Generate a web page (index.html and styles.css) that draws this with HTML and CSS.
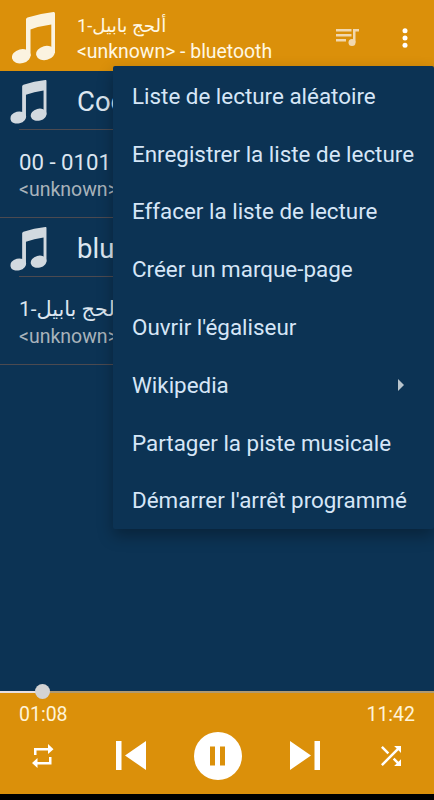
FILE: index.html
```html
<!DOCTYPE html>
<html lang="fr">
<head>
  <meta charset="UTF-8" />
  <meta name="viewport" content="width=device-width, initial-scale=1.0" />
  <title>Lecteur de musique</title>
  <link rel="stylesheet" href="styles.css">
</head>
<body>
  <svg class="defs" width="0" height="0">
    <symbol id="note" viewBox="0 0 43 52">
      <path d="M14 7.500 Q14 6 15.500 5.500 Q28 1.500 41.500 0 Q43 -.1 43 1.500 V41 H39.300 V12.500 Q28 14 18.500 17.500 V44 H14 Z" />
      <ellipse cx="9.300" cy="44.300" rx="9.500" ry="7" transform="rotate(-14 9.300 44.300)" />
      <ellipse cx="33.500" cy="41" rx="9.500" ry="7" transform="rotate(-14 33.500 41)" />
    </symbol>
  </svg>

  <div class="app">
    <header class="header">
      <svg class="header-note" viewBox="0 0 43 52"><use href="#note" /></svg>
      <div class="now-playing">
        <div class="now-title"><bdi dir="rtl">ألحج بابيل-1</bdi></div>
        <div class="now-artist">&lt;unknown&gt; - bluetooth</div>
      </div>
      <button class="icon-btn queue" aria-label="File de lecture">
        <svg width="24" height="18" viewBox="0 0 24 18">
          <path d="M0 0h15.500v2.500H0zM0 5h15.500v2.500H0zM0 10h10v2.500H0zM17 0h6v2.500h-3.500V13.500H17z" />
          <circle cx="16" cy="13.500" r="3.500" />
        </svg>
      </button>
      <button class="icon-btn more" aria-label="Plus d'options">
        <svg width="6" height="20" viewBox="0 0 6 20">
          <circle cx="3" cy="2.800" r="2.500" />
          <circle cx="3" cy="10" r="2.500" />
          <circle cx="3" cy="17.200" r="2.500" />
        </svg>
      </button>
    </header>

    <main class="playlist">
      <div class="folder">
        <svg class="folder-note" viewBox="0 0 43 52"><use href="#note" /></svg>
        <span>Coo</span>
      </div>
      <div class="track">
        <div class="track-title">00 - 0101</div>
        <div class="track-artist">&lt;unknown&gt;</div>
      </div>
      <div class="folder">
        <svg class="folder-note" viewBox="0 0 43 52"><use href="#note" /></svg>
        <span>blu</span>
      </div>
      <div class="track">
        <div class="track-title arabic"><bdi dir="rtl">ألحج بابيل-1</bdi></div>
        <div class="track-artist">&lt;unknown&gt;</div>
      </div>
    </main>

    <footer class="player">
      <div class="seek">
        <div class="seek-done"></div>
        <div class="seek-thumb"></div>
      </div>
      <div class="times"><span>01:08</span><span>11:42</span></div>
      <div class="controls">
        <button class="icon-btn" aria-label="Répéter">
          <svg width="22" height="24" viewBox="0 0 22 24">
            <path d="M2 11V4h14V0l5.500 5.200L16 10V6.500H4.500V11zM19.500 13v7.500h-14V24L0 19l5.500-5v4H17v-5z" />
          </svg>
        </button>
        <div class="transport">
          <button class="icon-btn" aria-label="Précédent">
            <svg width="30" height="29" viewBox="0 0 30 29">
              <path d="M0 0h5.500v29H0zM30 0v29L9 14.500z" />
            </svg>
          </button>
          <button class="icon-btn" aria-label="Pause">
            <svg width="48" height="48" viewBox="0 0 48 48">
              <circle cx="24" cy="24" r="24" />
              <path class="bars" d="M16 14.500h5v19h-5zM26 14.500h5v19h-5z" />
            </svg>
          </button>
          <button class="icon-btn" aria-label="Suivant">
            <svg width="30" height="29" viewBox="0 0 30 29">
              <path d="M0 0l21 14.500L0 29zM24.500 0H30v29h-5.500z" />
            </svg>
          </button>
        </div>
        <button class="icon-btn" aria-label="Aléatoire">
          <svg width="20" height="20" viewBox="4 4 16 16">
            <path d="M10.590 9.170L5.410 4 4 5.410l5.170 5.170 1.420-1.410zM14.500 4l2.040 2.040L4 18.590 5.410 20 17.960 7.460 20 9.500V4h-5.500zm.33 9.410l-1.410 1.410 3.130 3.130L14.500 20H20v-5.500l-2.040 2.040-3.130-3.130z" />
          </svg>
        </button>
      </div>
    </footer>
    <div class="navbar"></div>

    <ul class="menu">
      <li>Liste de lecture aléatoire</li>
      <li>Enregistrer la liste de lecture</li>
      <li>Effacer la liste de lecture</li>
      <li>Créer un marque-page</li>
      <li>Ouvrir l'égaliseur</li>
      <li class="submenu">Wikipedia</li>
      <li>Partager la piste musicale</li>
      <li>Démarrer l'arrêt programmé</li>
    </ul>
  </div>
</body>
</html>
```
FILE: styles.css
```css
* {
  box-sizing: border-box;
}

body {
  margin: 0;
  background: #000;
  font-family: Roboto, "DejaVu Sans", sans-serif;
}

.defs {
  position: absolute;
}

.app {
  position: relative;
  display: flex;
  flex-direction: column;
  width: 434px;
  height: 800px;
  overflow: hidden;
  background: #0c3354;
}

.icon-btn {
  display: flex;
  padding: 0;
  border: 0;
  background: none;
  fill: #fff;
}

/* header */
.header {
  display: flex;
  align-items: center;
  flex: none;
  height: 71px;
  padding: 4px 26px 0 12px;
  background: #db900a;
  color: #fff8e4;
}

.header-note {
  width: 43px;
  height: 52px;
  fill: #fbf3e0;
  overflow: visible;
}

.now-playing {
  flex: 1;
  margin-left: 22px;
  padding-top: 2px;
  font-size: 19.4px;
  line-height: 26px;
  white-space: nowrap;
}

.now-title {
  font-size: 18.3px;
}

.queue {
  margin-right: 42px;
  fill: #f1d8b0;
}

/* playlist */
.playlist {
  flex: 1;
  min-height: 0;
  color: #dce6f0;
  white-space: nowrap;
}

.folder {
  display: flex;
  align-items: center;
  height: 59px;
  padding: 2px 0 0 10px;
  font-size: 27.5px;
  background: linear-gradient(#4c4a50, #4c4a50) 19px 100% / 100% 1px no-repeat;
}

.folder-note {
  width: 37px;
  height: 44px;
  margin-right: 30px;
  fill: #d2d9df;
  overflow: visible;
}

.track {
  height: 88px;
  padding: 18px 19px 0;
  border-bottom: 1px solid #4c4a50;
}

.track-title {
  height: 29px;
  font-size: 22.2px;
  line-height: 29px;
}

.track-title.arabic {
  font-size: 20.8px;
}

.track-artist {
  font-size: 19.5px;
  line-height: 26px;
  color: #a9b3bb;
}

/* player */
.player {
  flex: none;
  height: 103px;
  background: #db900a;
}

.seek {
  position: relative;
  height: 2px;
  background: #b09a70;
}

.seek-done {
  width: 42px;
  height: 2px;
  background: #e8dfe0;
}

.seek-thumb {
  position: absolute;
  top: -7px;
  left: 35px;
  width: 15px;
  height: 15px;
  border-radius: 50%;
  background: #d3d3d3;
}

.times {
  display: flex;
  justify-content: space-between;
  padding: 9px 19px 0;
  color: #fff4d8;
  font-size: 19.5px;
  line-height: 26px;
}

.controls {
  display: flex;
  align-items: center;
  justify-content: space-between;
  height: 49px;
  margin-top: 3px;
  padding: 0 33px 0 32px;
}

.transport {
  display: flex;
  align-items: center;
  gap: 48px;
}

.bars {
  fill: #db900a;
}

.navbar {
  flex: none;
  height: 6px;
  background: #000;
}

/* overflow menu */
.menu {
  position: absolute;
  top: 66px;
  right: 0;
  width: 321px;
  height: 463px;
  margin: 0;
  padding: 1px 0 0;
  list-style: none;
  border-radius: 2px;
  background: #0c3354;
  box-shadow: 0 7px 16px rgba(0, 0, 0, 0.3);
  color: #d6e6f7;
  font-size: 22.4px;
  white-space: nowrap;
}

.menu li {
  display: flex;
  align-items: center;
  height: 57.8px;
  padding-left: 19px;
}

.menu .submenu {
  justify-content: space-between;
  padding-right: 30px;
}

.submenu::after {
  content: "";
  border: 6px solid transparent;
  border-left-color: #b8c4cc;
  border-right-width: 0;
}
```
